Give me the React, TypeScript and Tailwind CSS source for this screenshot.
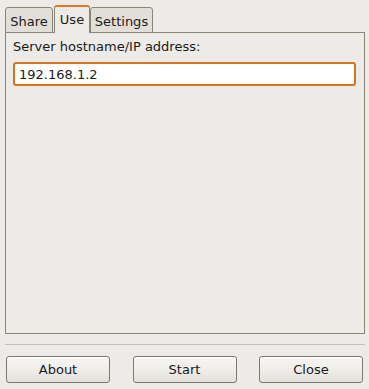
import React, { useState } from 'react';

const tabs = ['Share', 'Use', 'Settings'];

const tabWidths: Record<string, string> = {
  Share: 'w-[48px]',
  Use: 'w-[36px]',
  Settings: 'w-[63px]',
};

const Button: React.FC<{ label: string }> = ({ label }) => (
  <button className="w-[104px] h-[27px] rounded-[3px] border border-[#7d776c] bg-gradient-to-b from-[#f7f6f4] via-[#efedea] to-[#e4e1dc] text-[13px] text-[#1a1a1a] shadow-[inset_0_1px_0_#ffffff]">
    {label}
  </button>
);

export default function App() {
  const [active, setActive] = useState('Use');
  const [host, setHost] = useState('192.168.1.2');

  return (
    <div
      className="w-[369px] h-[389px] bg-[#edebe8] flex flex-col px-[5px] pt-[5px] text-[13px] text-[#1a1a1a]"
      style={{ fontFamily: '"DejaVu Sans", "Liberation Sans", sans-serif' }}
    >
      {/* tab strip */}
      <div className="flex items-end h-[28px] relative z-10 -mb-px">
        {tabs.map((t) =>
          t === active ? (
            <div
              key={t}
              className={`${tabWidths[t]} h-[28px] ml-px flex justify-center pt-[5px] leading-[15px] rounded-t-[3px] border-x border-t-2 border-[#8b8578] border-t-[#e0781f] bg-[#edebe8] cursor-default`}
            >
              {t}
            </div>
          ) : (
            <div
              key={t}
              onClick={() => setActive(t)}
              className={`${tabWidths[t]} h-[26px] flex justify-center pt-[6px] leading-[15px] rounded-t-[3px] border border-[#8b8578] bg-[#e2ded8] cursor-default`}
            >
              {t}
            </div>
          )
        )}
      </div>

      {/* panel */}
      <div className="w-[360px] h-[302px] border border-[#8b8578] px-[7px] pt-[6px]">
        {active === 'Use' && (
          <>
            <div className="leading-[16px]">Server hostname/IP address:</div>
            <input
              value={host}
              onChange={(e) => setHost(e.target.value)}
              className="mt-[7px] w-[343px] h-[24px] rounded-[3px] border-2 border-[#d9721d] bg-white px-[4px] text-[13px] text-[#1a1a1a] outline-none"
            />
          </>
        )}
      </div>

      <div className="mt-[10px] h-px w-[360px] bg-[#c4c0b9]" />

      <div className="mt-[11px] flex justify-between pl-px pr-[1px] w-[359px]">
        <Button label="About" />
        <Button label="Start" />
        <Button label="Close" />
      </div>
    </div>
  );
}
